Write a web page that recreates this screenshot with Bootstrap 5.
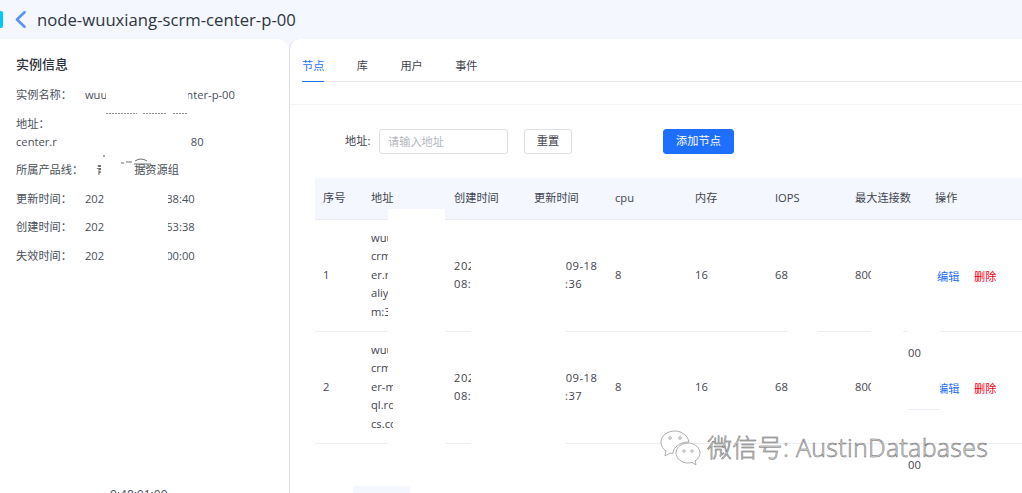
<!DOCTYPE html>
<html lang="zh">
<head>
<meta charset="utf-8">
<title>node-wuuxiang-scrm-center-p-00</title>
<link href="https://cdn.jsdelivr.net/npm/bootstrap@5.3.0/dist/css/bootstrap.min.css" rel="stylesheet">
<style>
html,body{height:493px;overflow:hidden}
body{position:relative;background:#f4f8fe;font-family:"Open Sans","Noto Sans CJK SC",sans-serif;font-size:11.2px;color:#3f4450}
.top-bar{height:39px;padding-right:12px}
.cyan-tick{width:3px;height:17px;background:#00c8ff;border-radius:0 2px 2px 0;margin-right:12px}
.top-title{font-size:16.7px;color:#2f3440;margin-left:11px}
.work{height:454px}
.side{width:289px;flex:none;background:#fff;border-radius:0 12px 0 0;padding:15px 16px 0;color:#4a4f5a}
.side-head{font-size:13px;line-height:20px;font-weight:500;color:#2d3038;margin:0 0 12px}
.kv{line-height:18px;margin-bottom:10.5px;white-space:nowrap}
.kv-tight{margin-bottom:0}
.kv-gap{margin-left:13px}
.g-wuu{margin-right:79px}
.g-time{margin-right:62px}
.g-addr{margin-right:134px}
.cut-qing{display:inline-block;width:5px;overflow:hidden;vertical-align:bottom;margin-right:33px}
.panel{flex:1 1 auto;min-width:0;background:#fff;border-left:1px solid #dedfe2;border-radius:10px 0 0 0;overflow:hidden}
.tabbar{margin-left:12px;height:43px;border-bottom:1px solid #e6e8ee;gap:32.4px;padding-top:18px}
.tab-item{line-height:17px;color:#3f4450;height:25px}
.tab-on{color:#1f6fff;border-bottom:1px solid #1f6fff}
.faint-rule{height:23px;border-bottom:1px solid #f4f5f8}
.filter{padding:24px 0 0 55px;height:73px}
.filter-label{line-height:24px;width:34px;flex:none}
.filter-input{width:129px;height:25px;border:1px solid #dde0e8;border-radius:3px;padding:0 8px;font-size:11.2px;color:#3f4450;outline:0}
.filter-input::placeholder{color:#b3b6bd}
.btn-reset{width:48px;height:25px;margin-left:16px;padding:0;font-size:11.2px;color:#3f4450;border:1px solid #dde0e8;border-radius:3px;background:#fff}
.btn-add{width:71px;height:25px;margin-left:91px;padding:0;font-size:11.2px;color:#fff;background:#1f6fff;border:1px solid #1f6fff;border-radius:3px}
.grid-wrap{margin-left:25px;width:722px}
.node-table{table-layout:fixed;width:722px;margin:0;font-size:11.2px;--bs-table-color:#3f4450;--bs-table-bg:transparent;--bs-table-border-color:#eceef2}
.node-table thead th{background:#f4f8fe;font-weight:400;height:41px;padding:1px 8px 0;vertical-align:middle;border-bottom:1px solid #e8ecf3;white-space:nowrap}
.node-table tbody td{height:112px;padding:0 8px;vertical-align:middle;line-height:18.5px;white-space:nowrap}
.node-table tbody td.stamp{letter-spacing:.5px}
.c-40{width:48px}.c-83{width:83px}.c-80{width:80px}.c-81{width:81px}
.act-edit{color:#1f6fff;text-decoration:none;margin:0 8px 0 2px;position:relative;top:2px}
.act-del{color:#f5000f;text-decoration:none;margin-left:6.6px;position:relative;top:2px}
.wipe{position:absolute;background:#fff}
.w1{left:388px;top:209px;width:57px;height:169px}
.w2{left:393px;top:378px;width:52px;height:64px}
.w3{left:388px;top:441px;width:57px;height:5px}
.w4{left:471px;top:221px;width:94px;height:225px}
.w5{left:871px;top:225px;width:32px;height:215px}
.w6{left:788px;top:328px;width:30px;height:6px}
.w7{left:908px;top:330px;width:32px;height:80px;border-bottom:1px solid #e8ecf3;padding:14px 0 0;line-height:18px;color:#3f4450}
.w8{left:908px;top:456px;width:32px;height:18px;line-height:18px;color:#3f4450}
.w9{left:353px;top:486px;width:57px;height:7px;background:#f4f8fe}
.w10{left:110px;top:486px;line-height:18px;font-size:12px;background:transparent;color:#4a4f5a;white-space:nowrap}
.w11{left:106px;top:86px;width:82px;height:18px}
.w12{left:160px;top:190px;width:8px;height:70px}
.scratch{position:absolute;left:100px;top:108px}
.mark-wrap{position:absolute;left:660px;top:429px;gap:6px;pointer-events:none}
.mark-text{font-family:"Open Sans","Noto Sans CJK SC",sans-serif;font-size:25px;font-weight:300;line-height:36px;letter-spacing:.3px;color:#e4e4e4;-webkit-text-stroke:.5px #666;white-space:nowrap;text-shadow:1px 1px 0 #fff}
</style>
</head>
<body>
<header class="top-bar d-flex align-items-center">
  <span class="cyan-tick"></span>
  <svg width="11" height="17" viewBox="0 0 11 17" fill="none" aria-hidden="true"><path d="M9.5 1.2 2 8.500l7.500 7.300" stroke="#5b93f5" stroke-width="2.6" stroke-linecap="round" stroke-linejoin="round"/></svg>
  <span class="top-title">node-wuuxiang-scrm-center-p-00</span>
</header>
<div class="work d-flex">
  <aside class="side">
    <h2 class="side-head">实例信息</h2>
    <div class="kv">实例名称：<span class="kv-gap"><span class="g-wuu">wuu</span>nter-p-00</span></div>
    <div class="kv kv-tight">地址：</div>
    <div class="kv"><span class="g-addr">center.r</span>80</div>
    <div class="kv">所属产品线：<span class="kv-gap"><span class="cut-qing">青</span>据资源组</span></div>
    <div class="kv">更新时间：<span class="kv-gap"><span class="g-time">202</span>38:40</span></div>
    <div class="kv">创建时间：<span class="kv-gap"><span class="g-time">202</span>53:38</span></div>
    <div class="kv">失效时间：<span class="kv-gap"><span class="g-time">202</span>00:00</span></div>
  </aside>
  <main class="panel">
    <nav class="tabbar d-flex">
      <span class="tab-item tab-on">节点</span>
      <span class="tab-item">库</span>
      <span class="tab-item">用户</span>
      <span class="tab-item">事件</span>
    </nav>
    <div class="faint-rule"></div>
    <form class="filter d-flex align-items-start">
      <label class="filter-label">地址:</label>
      <input class="filter-input" placeholder="请输入地址">
      <button type="button" class="btn btn-reset">重置</button>
      <button type="button" class="btn btn-add">添加节点</button>
    </form>
    <div class="grid-wrap">
      <table class="table node-table">
        <colgroup><col class="c-40"><col class="c-83"><col class="c-80"><col class="c-81"><col class="c-80"><col class="c-80"><col class="c-80"><col class="c-80"><col></colgroup>
        <thead><tr><th>序号</th><th>地址</th><th>创建时间</th><th>更新时间</th><th>cpu</th><th>内存</th><th>IOPS</th><th>最大连接数</th><th>操作</th></tr></thead>
        <tbody>
          <tr>
            <td>1</td><td>wuuxiang-<br>crm-cent<br>er.rds.<br>aliyuncs.co<br>m:3306</td>
            <td class="stamp">2023-09-18<br>08:12:36</td><td class="stamp">2023-09-18<br>08:12:36</td>
            <td>8</td><td>16</td><td>68</td><td>8000</td>
            <td><a href="#" class="act-edit">编辑</a><a href="#" class="act-del">删除</a></td>
          </tr>
          <tr>
            <td>2</td><td>wuuxiang-<br>crm-cent<br>er-mysql<br>ql.rds.ali<br>cs.com</td>
            <td class="stamp">2023-09-18<br>08:12:37</td><td class="stamp">2023-09-18<br>08:12:37</td>
            <td>8</td><td>16</td><td>68</td><td>8000</td>
            <td><a href="#" class="act-edit">编辑</a><a href="#" class="act-del">删除</a></td>
          </tr>
        </tbody>
      </table>
    </div>
  </main>
</div>
<div class="wipe w1"></div><div class="wipe w2"></div><div class="wipe w3"></div><div class="wipe w4"></div><div class="wipe w5"></div><div class="wipe w6"></div><div class="wipe w11"></div><div class="wipe w12"></div>
<div class="wipe w7">00</div><div class="wipe w8">00</div><div class="wipe w9"></div><div class="wipe w10">9:48:01:00</div>
<svg class="scratch" width="90" height="62" viewBox="0 0 90 62" aria-hidden="true"><path d="M6 5.500h31M43 5.500h24M73 5.500h14" stroke="#8a8d94" stroke-width="1" stroke-dasharray="2 1"/><path d="M21 55h3M26 54h6M35 53q6-4 12 0M34 56h17M36 59h14" stroke="#6d7078" stroke-width="1" fill="none"/><path d="M4 47v2" stroke="#555" stroke-width="1"/></svg>
<div class="mark-wrap d-flex align-items-center">
  <svg width="41" height="36" viewBox="0 0 41 36" fill="#fff" stroke="#999" stroke-width=".8" aria-hidden="true"><path d="M15 2C7 2 1 7 1 13c0 4 2 7 5 9l-1 5 5-3c1 .3 2 .5 3 .5C13 18 20 13 29 13 28 7 22 2 15 2z"/><path d="M28 14c-7 0-12 5-12 10s5 10 12 10c1.500 0 3-.3 4-.6l4 2.600-1-4c3-2 5-5 5-8 0-5-5-10-12-10z"/><circle cx="10" cy="9" r="1.300"/><circle cx="20" cy="9" r="1.300"/><circle cx="24" cy="22" r="1.200"/><circle cx="32" cy="22" r="1.200"/></svg>
  <span class="mark-text">微信号: AustinDatabases</span>
</div>
</body>
</html>
